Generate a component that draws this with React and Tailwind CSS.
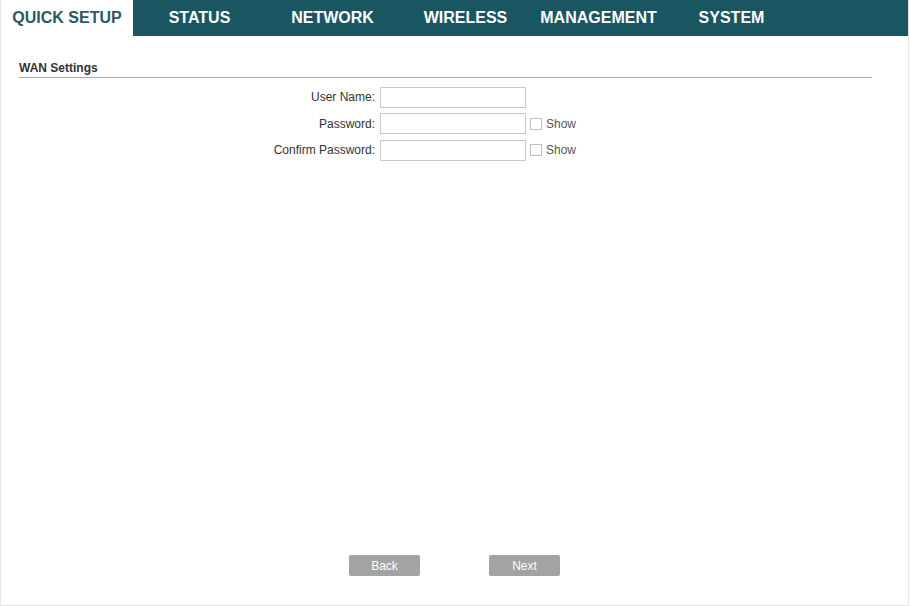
import React from "react";

const tabs = ["QUICK SETUP", "STATUS", "NETWORK", "WIRELESS", "MANAGEMENT", "SYSTEM"];

const Field = ({ label, show }) => (
  <div className="flex items-center h-[26.5px]">
    <label className="w-[360px] pr-[5px] text-right text-[12px] text-[#333]">{label}</label>
    <input
      type={show ? "password" : "text"}
      className="w-[146px] h-[21px] border border-[#c8c8c8] bg-white outline-none"
    />
    {show && (
      <div className="flex items-center ml-[4px] text-[12px] text-[#555]">
        <span className="w-[12px] h-[12px] border border-[#bdbdbd] bg-white mr-[4px]" />
        Show
      </div>
    )}
  </div>
);

const App = () => {
  return (
    <div
      className="w-[909px] h-[606px] flex flex-col bg-white border-l border-r border-b border-[#e6e6e6]"
      style={{ fontFamily: '"Liberation Sans", Arial, sans-serif' }}
    >
      <nav className="flex h-[36px] bg-[#1a5662]">
        {tabs.map((t, i) => (
          <div
            key={t}
            className={
              "flex items-center justify-center text-[16px] font-bold " +
              (i === 0 ? "w-[132px] bg-white text-[#2a5a63]" : "w-[133px] text-white")
            }
          >
            {t}
          </div>
        ))}
      </nav>

      <div className="px-[18px] pt-[24px] pr-[36px]">
        <h3 className="text-[12px] leading-[16px] font-bold text-[#333] pb-[1px] border-b border-[#a8a8a8]">WAN Settings</h3>
      </div>

      <div className="pl-[19px] pt-[6px]">
        <Field label="User Name:" />
        <Field label="Password:" show />
        <Field label="Confirm Password:" show />
      </div>

      <div className="flex-1" />

      <div className="flex justify-center gap-[69px] pb-[29px]">
        <button className="w-[71px] h-[21px] rounded-[2px] bg-[#a3a3a3] text-white text-[12px]">Back</button>
        <button className="w-[71px] h-[21px] rounded-[2px] bg-[#a3a3a3] text-white text-[12px]">Next</button>
      </div>
    </div>
  );
};

export default App;
